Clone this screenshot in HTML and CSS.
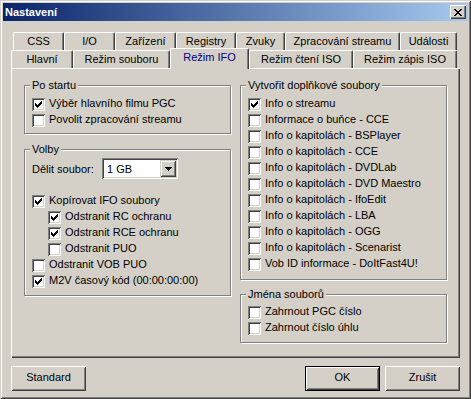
FILE: index.html
```html
<!DOCTYPE html>
<html lang="cs">
<head>
  <meta charset="UTF-8" />
  <title>Nastavení</title>
  <link rel="stylesheet" href="styles.css">
</head>
<body>

  <div class="okno">

    <!-- Titulek -->
    <div class="titulek">
      <span>Nastavení</span>
      <span class="zavrit">
        <svg width="8" height="7" viewBox="0 0 8 7" shape-rendering="crispEdges">
          <path d="M0 0h2v1h-2z M6 0h2v1h-2z M1 1h2v1h-2z M5 1h2v1h-2z M2 2h4v1h-4z M3 3h2v1h-2z M2 4h4v1h-4z M1 5h2v1h-2z M5 5h2v1h-2z M0 6h2v1h-2z M6 6h2v1h-2z" fill="#000"/>
        </svg>
      </span>
    </div>

    <div class="klient">

      <!-- Záložky -->
      <div class="zalozky">
        <div class="rada rada-zadni">
          <div class="zalozka z-css">CSS</div>
          <div class="zalozka z-io">I/O</div>
          <div class="zalozka z-zarizeni">Zařízení</div>
          <div class="zalozka z-registry">Registry</div>
          <div class="zalozka z-zvuky">Zvuky</div>
          <div class="zalozka z-stream">Zpracování streamu</div>
          <div class="zalozka z-udalosti">Události</div>
        </div>
        <div class="rada">
          <div class="zalozka z-hlavni">Hlavní</div>
          <div class="zalozka z-soubor">Režim souboru</div>
          <div class="zalozka z-ifo aktivni">Režim IFO</div>
          <div class="zalozka z-cteni">Režim čtení ISO</div>
          <div class="zalozka z-zapis">Režim zápis ISO</div>
        </div>
      </div>

      <!-- Obsah záložky -->
      <div class="panel">
        <div class="sloupec">

          <div class="skupina g-start">
            <span class="popisek">Po startu</span>
            <div class="volba"><span class="box"><svg width="7" height="7" viewBox="0 0 7 7" shape-rendering="crispEdges"><path d="M6 0h1v1h-1z M5 1h2v1h-2z M0 2h1v1h-1z M4 2h3v1h-3z M0 3h2v1h-2z M3 3h3v1h-3z M0 4h5v1h-5z M1 5h3v1h-3z M2 6h1v1h-1z" fill="#000"/></svg></span><span class="text">Výběr hlavního filmu PGC</span></div>
            <div class="volba"><span class="box"></span><span class="text">Povolit zpracování streamu</span></div>
          </div>

          <div class="skupina g-volby">
            <span class="popisek">Volby</span>
            <div class="radek-combo">
              <span class="combo-label">Dělit soubor:</span>
              <div class="combo">
                <span class="combo-text">1 GB</span>
                <span class="combo-sipka">
                  <svg width="7" height="4" viewBox="0 0 7 4" shape-rendering="crispEdges"><path d="M0 0h7v1h-7z M1 1h5v1h-5z M2 2h3v1h-3z M3 3h1v1h-1z" fill="#000"/></svg>
                </span>
              </div>
            </div>
            <div class="volba"><span class="box"><svg width="7" height="7" viewBox="0 0 7 7" shape-rendering="crispEdges"><path d="M6 0h1v1h-1z M5 1h2v1h-2z M0 2h1v1h-1z M4 2h3v1h-3z M0 3h2v1h-2z M3 3h3v1h-3z M0 4h5v1h-5z M1 5h3v1h-3z M2 6h1v1h-1z" fill="#000"/></svg></span><span class="text">Kopírovat IFO soubory</span></div>
            <div class="volba odsazena"><span class="box"><svg width="7" height="7" viewBox="0 0 7 7" shape-rendering="crispEdges"><path d="M6 0h1v1h-1z M5 1h2v1h-2z M0 2h1v1h-1z M4 2h3v1h-3z M0 3h2v1h-2z M3 3h3v1h-3z M0 4h5v1h-5z M1 5h3v1h-3z M2 6h1v1h-1z" fill="#000"/></svg></span><span class="text">Odstranit RC ochranu</span></div>
            <div class="volba odsazena"><span class="box"><svg width="7" height="7" viewBox="0 0 7 7" shape-rendering="crispEdges"><path d="M6 0h1v1h-1z M5 1h2v1h-2z M0 2h1v1h-1z M4 2h3v1h-3z M0 3h2v1h-2z M3 3h3v1h-3z M0 4h5v1h-5z M1 5h3v1h-3z M2 6h1v1h-1z" fill="#000"/></svg></span><span class="text">Odstranit RCE ochranu</span></div>
            <div class="volba odsazena"><span class="box"></span><span class="text">Odstranit PUO</span></div>
            <div class="volba"><span class="box"></span><span class="text">Odstranit VOB PUO</span></div>
            <div class="volba"><span class="box"><svg width="7" height="7" viewBox="0 0 7 7" shape-rendering="crispEdges"><path d="M6 0h1v1h-1z M5 1h2v1h-2z M0 2h1v1h-1z M4 2h3v1h-3z M0 3h2v1h-2z M3 3h3v1h-3z M0 4h5v1h-5z M1 5h3v1h-3z M2 6h1v1h-1z" fill="#000"/></svg></span><span class="text">M2V časový kód (00:00:00:00)</span></div>
          </div>

        </div>
        <div class="sloupec">

          <div class="skupina g-vytvorit">
            <span class="popisek">Vytvořit doplňkové soubory</span>
            <div class="volba"><span class="box"><svg width="7" height="7" viewBox="0 0 7 7" shape-rendering="crispEdges"><path d="M6 0h1v1h-1z M5 1h2v1h-2z M0 2h1v1h-1z M4 2h3v1h-3z M0 3h2v1h-2z M3 3h3v1h-3z M0 4h5v1h-5z M1 5h3v1h-3z M2 6h1v1h-1z" fill="#000"/></svg></span><span class="text">Info o streamu</span></div>
            <div class="volba"><span class="box"></span><span class="text">Informace o buňce - CCE</span></div>
            <div class="volba"><span class="box"></span><span class="text">Info o kapitolách - BSPlayer</span></div>
            <div class="volba"><span class="box"></span><span class="text">Info o kapitolách - CCE</span></div>
            <div class="volba"><span class="box"></span><span class="text">Info o kapitolách - DVDLab</span></div>
            <div class="volba"><span class="box"></span><span class="text">Info o kapitolách - DVD Maestro</span></div>
            <div class="volba"><span class="box"></span><span class="text">Info o kapitolách - IfoEdit</span></div>
            <div class="volba"><span class="box"></span><span class="text">Info o kapitolách - LBA</span></div>
            <div class="volba"><span class="box"></span><span class="text">Info o kapitolách - OGG</span></div>
            <div class="volba"><span class="box"></span><span class="text">Info o kapitolách - Scenarist</span></div>
            <div class="volba"><span class="box"></span><span class="text">Vob ID informace - DoItFast4U!</span></div>
          </div>

          <div class="skupina g-jmena">
            <span class="popisek">Jména souborů</span>
            <div class="volba"><span class="box"></span><span class="text">Zahrnout PGC číslo</span></div>
            <div class="volba"><span class="box"></span><span class="text">Zahrnout číslo úhlu</span></div>
          </div>

        </div>
      </div>

      <!-- Tlačítka -->
      <div class="tlacitka">
        <button class="tlacitko">Standard</button>
        <button class="tlacitko vychozi">OK</button>
        <button class="tlacitko zrusit">Zrušit</button>
      </div>

    </div>
  </div>

</body>
</html>
```

FILE: styles.css
```css
* {
  margin: 0;
  padding: 0;
  box-sizing: border-box;
}

html, body {
  width: 471px;
  height: 399px;
  overflow: hidden;
  background: #d4d0c8;
  font-family: "Liberation Sans", Arial, sans-serif;
  font-size: 11px;
  color: #000;
}

/* Okno */
.okno {
  width: 471px;
  height: 399px;
  padding: 3px;
  background: #d4d0c8;
  box-shadow: inset 1px 1px 0 #d4d0c8, inset -1px -1px 0 #404040,
              inset 2px 2px 0 #fff, inset -2px -2px 0 #808080;
}

.titulek {
  height: 18px;
  display: flex;
  align-items: center;
  justify-content: space-between;
  padding: 0 2px;
  background: linear-gradient(to right, #0a246a, #a6caf0);
  color: #fff;
  font-weight: bold;
}

.zavrit {
  width: 16px;
  height: 14px;
  display: flex;
  align-items: center;
  justify-content: center;
  background: #d4d0c8;
  box-shadow: inset 1px 1px 0 #fff, inset -1px -1px 0 #404040,
              inset -2px -2px 0 #808080;
}

.klient {
  padding: 11px 8px 0;
}

/* Záložky */
.zalozky {
  height: 36px;
}

.rada {
  display: flex;
  height: 18px;
}

.rada-zadni {
  padding-left: 2px;
}

.zalozka {
  flex: none;
  height: 18px;
  background: #d4d0c8;
  border-top: 1px solid #fff;
  border-left: 1px solid #fff;
  border-right: 1px solid #404040;
  border-radius: 2px 2px 0 0;
  box-shadow: inset -1px 0 0 #808080;
  text-align: center;
  line-height: 16px;
  white-space: nowrap;
}

.zalozka.aktivni {
  position: relative;
  z-index: 1;
  height: 21px;
  margin-top: -2px;
  color: #000080;
}

.z-css { width: 51px; }
.z-io { width: 51px; }
.z-zarizeni { width: 61px; }
.z-registry { width: 60px; }
.z-zvuky { width: 49px; }
.z-stream { width: 115px; }
.z-udalosti { width: 57px; }

.z-hlavni { width: 62px; }
.z-soubor { width: 97px; }
.z-ifo { width: 79px; }
.z-cteni { width: 104px; }
.z-zapis { width: 104px; }

/* Panel */
.panel {
  height: 290px;
  display: grid;
  grid-template-columns: 208px 208px;
  column-gap: 8px;
  align-content: start;
  padding: 17px 12px 0 13px;
  box-shadow: inset 1px 1px 0 #fff, inset -1px -1px 0 #404040,
              inset -2px -2px 0 #808080;
}

.skupina {
  position: relative;
  width: 207px;
  border: 1px solid #808080;
  box-shadow: inset 1px 1px 0 #fff, 1px 1px 0 #fff;
  padding: 12px 0 0 7px;
}

.g-start { height: 49px; }
.g-volby { height: 147px; margin-top: 15px; padding-top: 8px; }
.g-vytvorit { height: 195px; }
.g-jmena { height: 49px; margin-top: 14px; padding-top: 11px; }

.popisek {
  position: absolute;
  top: -7px;
  left: 5px;
  padding: 0 2px;
  background: #d4d0c8;
  line-height: 13px;
  white-space: nowrap;
}

/* Zaškrtávací políčka */
.volba {
  display: flex;
  align-items: flex-start;
  height: 16px;
}

.volba.odsazena {
  padding-left: 16px;
}

.box {
  flex: none;
  width: 13px;
  height: 13px;
  padding: 3px;
  background: #fff;
  box-shadow: inset 1px 1px 0 #808080, inset -1px -1px 0 #fff,
              inset 2px 2px 0 #404040, inset -2px -2px 0 #d4d0c8;
}

.box svg {
  display: block;
}

.text {
  margin-left: 4px;
  line-height: 11px;
  white-space: nowrap;
}

/* Rozbalovací seznam */
.radek-combo {
  display: flex;
  align-items: center;
  height: 21px;
  margin-bottom: 16px;
}

.combo-label {
  width: 70px;
}

.combo {
  width: 76px;
  height: 21px;
  display: flex;
  align-items: center;
  padding: 2px;
  background: #fff;
  box-shadow: inset 1px 1px 0 #808080, inset -1px -1px 0 #fff,
              inset 2px 2px 0 #404040, inset -2px -2px 0 #d4d0c8;
}

.combo-text {
  flex: 1;
  padding-left: 3px;
}

.combo-sipka {
  width: 16px;
  height: 17px;
  display: flex;
  align-items: center;
  justify-content: center;
  background: #d4d0c8;
  box-shadow: inset 1px 1px 0 #d4d0c8, inset -1px -1px 0 #404040,
              inset 2px 2px 0 #fff, inset -2px -2px 0 #808080;
}

/* Tlačítka */
.tlacitka {
  display: flex;
  margin-top: 8px;
}

.tlacitko {
  width: 75px;
  height: 25px;
  border: none;
  background: #d4d0c8;
  font: inherit;
  color: #000;
  line-height: 23px;
  padding-bottom: 2px;
  box-shadow: inset 1px 1px 0 #fff, inset -1px -1px 0 #404040,
              inset 2px 2px 0 #d4d0c8, inset -2px -2px 0 #808080;
}

.tlacitko.vychozi {
  margin-left: auto;
  border: 1px solid #000;
  line-height: 21px;
}

.tlacitko.zrusit {
  margin-left: 5px;
}
```
